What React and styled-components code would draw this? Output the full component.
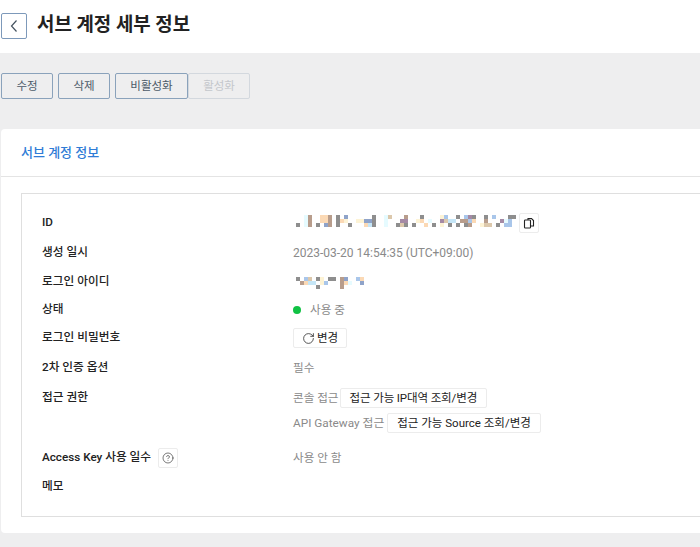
import styled, { createGlobalStyle } from 'styled-components'
import { RotateCw, CircleHelp } from 'lucide-react'

const GlobalStyle = createGlobalStyle`
  html, body {
    margin: 0;
    padding: 0;
    height: 547px;
    overflow: hidden;
    background: #eeeeef;
    font-family: Roboto, "Noto Sans CJK KR", sans-serif;
  }
`

const Page = styled.div`
  width: 700px;
  height: 547px;
  overflow: hidden;
`

const Header = styled.header`
  height: 53px;
  background: #fff;
  display: flex;
  align-items: flex-start;
  padding: 13px 0 0 1px;
  box-sizing: border-box;
`

const BackButton = styled.button`
  width: 26px;
  height: 26px;
  padding: 0;
  border: 1px solid #7d99ba;
  border-radius: 2px;
  background: #fff;
  display: flex;
  align-items: center;
  justify-content: center;
`

const Title = styled.h1`
  margin: -2px 0 0 10px;
  font-size: 18.9px;
  line-height: 28px;
  font-weight: 700;
  color: #222;
`

const Toolbar = styled.div`
  display: flex;
  padding: 20px 0 0 1px;
  height: 76px;
  box-sizing: border-box;
`

const ActionButton = styled.button`
  width: ${p => p.$width}px;
  height: 26px;
  padding: 0;
  margin-right: ${p => p.$gap ?? 5}px;
  border: 1px solid ${p => (p.disabled ? '#d3d8de' : '#8aa2bb')};
  border-radius: 2px;
  background: transparent;
  color: ${p => (p.disabled ? '#c4c7cc' : '#4c5a68')};
  font: 400 11.5px/24px Roboto, "Noto Sans CJK KR", sans-serif;
`

const Card = styled.section`
  width: 760px;
  height: 404px;
  margin-left: 1px;
  background: #fff;
  border-radius: 4px;
`

const CardTitle = styled.h2`
  margin: 0;
  height: 48px;
  padding: 14px 0 0 20px;
  box-sizing: border-box;
  border-bottom: 1px solid #e4e4e4;
  font-size: 13px;
  line-height: 19px;
  font-weight: 500;
  color: #2f7cd6;
`

const InfoBox = styled.div`
  margin: 16px 0 0 20px;
  height: 324px;
  box-sizing: border-box;
  border: 1px solid #dfdfdf;
  padding-top: 19px;
`

const Row = styled.div`
  display: flex;
  margin-top: ${p => p.$top ?? 8}px;
  min-height: 20px;
`

const Label = styled.div`
  width: 271px;
  padding-left: 20px;
  box-sizing: border-box;
  display: flex;
  align-items: flex-start;
  font-size: 11.7px;
  line-height: 19px;
  font-weight: 500;
  color: #222;
`

const Value = styled.div`
  display: flex;
  align-items: center;
  font-size: ${p => p.$size ?? 11.6}px;
  line-height: 20px;
  color: #8a8a8a;
`

const Stack = styled.div`
  display: flex;
  flex-direction: column;
  gap: 5px;
`

const SmallButton = styled.button`
  height: 20px;
  width: ${p => (p.$square ? '20px' : 'auto')};
  padding: 0 ${p => (p.$square ? 0 : p.$pad ?? 9)}px;
  margin-left: ${p => p.$left ?? 0}px;
  border: 1px solid #ececec;
  border-radius: 2px;
  background: #fff;
  color: #222;
  display: flex;
  align-items: center;
  justify-content: center;
  gap: 2px;
  letter-spacing: ${p => p.$tight ?? 0}px;
  font: 400 11.5px/18px Roboto, "Noto Sans CJK KR", sans-serif;
`

const StatusDot = styled.span`
  width: 8px;
  height: 8px;
  border-radius: 50%;
  background: #10c244;
  margin-right: 9px;
`

const MosaicBox = styled.svg`
  display: block;
  margin: ${p => p.$up ?? 0}px 0 0 3px;
`

const palette = {
  g: '#8e8e8e', t: '#b89d8c', p: '#fbd9b5', c: '#e6fbff', b: '#a9c6ea',
  v: '#8fa3c9', y: '#fdf3d5', m: '#a58aa5', s: '#dcc8ac', k: '#c5e6f7',
}

const idMosaic = [
  '..ct..ppt.g.v......g..cs...t...g....yb..g.bmg..g.b...gg',
  '..ct..ppt.gpy..yyvvg..c...mm..yp.c..mskk.ttbp..t...mcb.',
  'g.ct.g.vt.g..g...pkg..c..gsg.g..p.g.y.g.g.gt..yss.g.bb.',
]

const loginMosaic = [
  'g.bs.gy.gg.tv..bp',
  '.tpkk.yb...tpc..v',
  '.....g.....t.....',
]

function Mosaic({ rows, up }) {
  return (
    <MosaicBox $up={up} width={rows[0].length * 4} height={rows.length * 4} shapeRendering="crispEdges">
      {rows.map((row, y) =>
        row.split('').map((ch, x) =>
          palette[ch] ? <rect key={x} x={x * 4} y={y * 4} width="4" height="4" fill={palette[ch]} /> : null
        )
      )}
    </MosaicBox>
  )
}

export default function App() {
  return (
    <Page>
      <GlobalStyle />
      <Header>
        <BackButton>
          <svg width="10" height="14" viewBox="0 0 10 14" fill="none" stroke="#44525f" strokeWidth="1.2">
            <path d="M7.5 1.5 2.5 7l5 5.5" />
          </svg>
        </BackButton>
        <Title>서브 계정 세부 정보</Title>
      </Header>
      <Toolbar>
        <ActionButton $width={52}>수정</ActionButton>
        <ActionButton $width={52}>삭제</ActionButton>
        <ActionButton $width={73} $gap={0}>비활성화</ActionButton>
        <ActionButton $width={62} disabled>활성화</ActionButton>
      </Toolbar>
      <Card>
        <CardTitle>서브 계정 정보</CardTitle>
        <InfoBox>
          <Row $top={0}>
            <Label>ID</Label>
            <Value>
              <Mosaic rows={idMosaic} up={-4} />
              <SmallButton $square $left={3}>
                <svg width="12" height="12" viewBox="0 0 12 12" fill="none" stroke="#222" strokeWidth="1.1">
                  <rect x="1.5" y="3" width="6" height="8" rx="0.8" />
                  <path d="M5 3V1.5h3.5l2 2V9H7.5" />
                </svg>
              </SmallButton>
            </Value>
          </Row>
          <Row $top={10}>
            <Label>생성 일시</Label>
            <Value $size={12}>2023-03-20 14:54:35 (UTC+09:00)</Value>
          </Row>
          <Row $top={9}>
            <Label>로그인 아이디</Label>
            <Value><Mosaic rows={loginMosaic} up={2} /></Value>
          </Row>
          <Row>
            <Label>상태</Label>
            <Value><StatusDot />사용 중</Value>
          </Row>
          <Row>
            <Label>로그인 비밀번호</Label>
            <Value>
              <SmallButton $pad={8}>
                <RotateCw size={13} strokeWidth={1.4} color="#222" />
                변경
              </SmallButton>
            </Value>
          </Row>
          <Row $top={10}>
            <Label>2차 인증 옵션</Label>
            <Value>필수</Value>
          </Row>
          <Row $top={10}>
            <Label>접근 권한</Label>
            <Stack>
              <Value>
                콘솔 접근
                <SmallButton $left={1} $tight={-0.12}>접근 가능 IP대역 조회/변경</SmallButton>
              </Value>
              <Value $size={11.8}>
                API Gateway 접근
                <SmallButton $left={3}>접근 가능 Source 조회/변경</SmallButton>
              </Value>
            </Stack>
          </Row>
          <Row $top={15}>
            <Label>
              Access Key 사용 일수
              <SmallButton $square $left={7}>
                <CircleHelp size={12} strokeWidth={1.2} color="#222" />
              </SmallButton>
            </Label>
            <Value>사용 안 함</Value>
          </Row>
          <Row $top={9}>
            <Label>메모</Label>
          </Row>
        </InfoBox>
      </Card>
    </Page>
  )
}
